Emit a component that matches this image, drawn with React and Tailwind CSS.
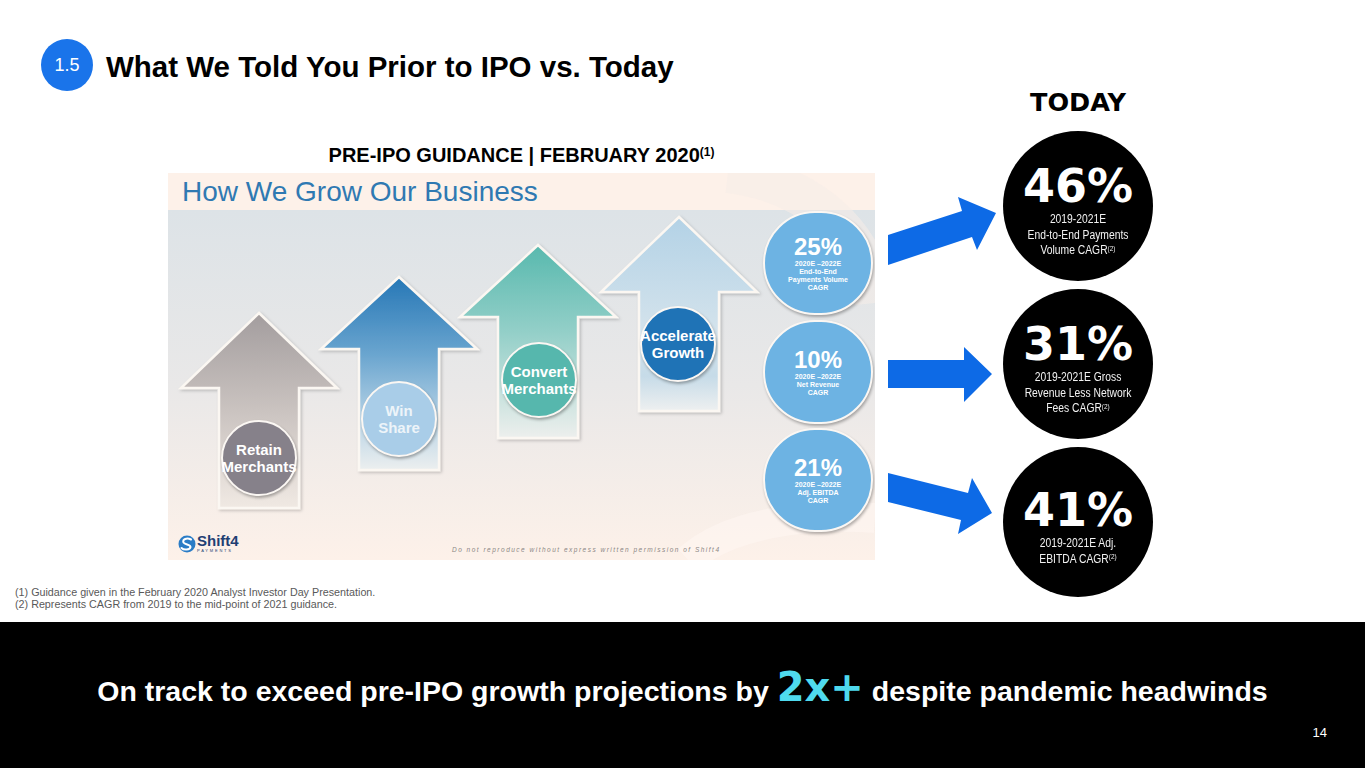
const arrows = [
  { cx: 91, ty: 140, by: 215, bb: 335, g: "g1" },
  { cx: 231, ty: 104, by: 176, bb: 297, g: "g2" },
  { cx: 370, ty: 72, by: 144, bb: 265, g: "g3" },
  { cx: 511, ty: 44, by: 119, bb: 238, g: "g4" },
];

function pts({ cx, ty, by, bb }) {
  const hw = 78;
  const sw = 40;
  return `${cx},${ty} ${cx + hw},${by} ${cx + sw},${by} ${cx + sw},${bb} ${cx - sw},${bb} ${cx - sw},${by} ${cx - hw},${by}`;
}

function GrowImage() {
  return (
    <div className="relative ml-[168px] mt-[8px] w-[707px] h-[387px] flex flex-col overflow-hidden">
      <div className="h-[37px] bg-[#fdf1e9] pl-[14px] pt-[5px] text-[28px] leading-none text-[#2f79b2] font-['Liberation_Sans',sans-serif]">
        How We Grow Our Business
      </div>
      <div className="flex-1 bg-linear-to-b from-[#dde3e7] via-[#e9e8e8] to-[#fdf1e9]"></div>

      <svg className="absolute left-0 top-0" width="707" height="387" viewBox="0 0 707 387">
        <defs>
          <linearGradient id="g1" x1="0" y1="0" x2="0" y2="1">
            <stop offset="0%" stopColor="#a39d9e" />
            <stop offset="50%" stopColor="#cac3c0" />
            <stop offset="100%" stopColor="#f0e9e3" />
          </linearGradient>
          <linearGradient id="g2" x1="0" y1="0" x2="0" y2="1">
            <stop offset="0%" stopColor="#2677b6" />
            <stop offset="40%" stopColor="#6aa5cf" />
            <stop offset="75%" stopColor="#b9d4e6" />
            <stop offset="100%" stopColor="#ecefef" />
          </linearGradient>
          <linearGradient id="g3" x1="0" y1="0" x2="0" y2="1">
            <stop offset="0%" stopColor="#58b9ae" />
            <stop offset="45%" stopColor="#93cfc8" />
            <stop offset="100%" stopColor="#edefed" />
          </linearGradient>
          <linearGradient id="g4" x1="0" y1="0" x2="0" y2="1">
            <stop offset="0%" stopColor="#b3d2e6" />
            <stop offset="60%" stopColor="#d4e3ec" />
            <stop offset="82%" stopColor="#c6dbe8" />
            <stop offset="100%" stopColor="#eef0f0" />
          </linearGradient>
          <filter id="sh" x="-20%" y="-20%" width="140%" height="140%">
            <feDropShadow dx="1.5" dy="1.5" stdDeviation="1.5" floodColor="#000" floodOpacity="0.22" />
          </filter>
        </defs>
        <path d="M560 0 C 640 10, 700 60, 707 130" fill="none" stroke="#f6ede8" strokeOpacity="0.55" strokeWidth="40" />
        <path d="M520 387 C 560 350, 640 340, 707 345" fill="none" stroke="#fff8f3" strokeOpacity="0.5" strokeWidth="30" />
        {arrows.map((a) => (
          <polygon
            key={a.g}
            points={pts(a)}
            fill={`url(#${a.g})`}
            stroke="#fbf7f2"
            strokeWidth="2.5"
            strokeLinejoin="miter"
            filter="url(#sh)"
          />
        ))}
      </svg>

      <div className="absolute left-[53px] top-[247px] w-[76px] h-[76px] rounded-full bg-[#86818a] border-2 border-[#fbf7f3] shadow-[1px_2px_3px_rgba(0,0,0,0.3)] flex flex-col items-center justify-center text-white text-[15px] font-bold leading-[17px] font-['Liberation_Sans',sans-serif] whitespace-nowrap">
        <span>Retain</span>
        <span>Merchants</span>
      </div>
      <div className="absolute left-[193px] top-[208px] w-[76px] h-[76px] rounded-full bg-[#a9cde8] border-2 border-[#fbf7f3] shadow-[1px_2px_3px_rgba(0,0,0,0.3)] flex flex-col items-center justify-center text-[#edf4f9] text-[15px] font-bold leading-[17px] font-['Liberation_Sans',sans-serif] whitespace-nowrap">
        <span>Win</span>
        <span>Share</span>
      </div>
      <div className="absolute left-[333px] top-[169px] w-[76px] h-[76px] rounded-full bg-[#56b7ad] border-2 border-[#fbf7f3] shadow-[1px_2px_3px_rgba(0,0,0,0.3)] flex flex-col items-center justify-center text-white text-[15px] font-bold leading-[17px] font-['Liberation_Sans',sans-serif] whitespace-nowrap">
        <span>Convert</span>
        <span>Merchants</span>
      </div>
      <div className="absolute left-[472px] top-[133px] w-[76px] h-[76px] rounded-full bg-[#1f73b6] border-2 border-[#fbf7f3] shadow-[1px_2px_3px_rgba(0,0,0,0.3)] flex flex-col items-center justify-center text-white text-[15px] font-bold leading-[17px] font-['Liberation_Sans',sans-serif] whitespace-nowrap">
        <span>Accelerate</span>
        <span>Growth</span>
      </div>

      <div className="absolute left-[595px] top-[38px] w-[110px] h-[104px] rounded-full bg-[#6db3e3] border-2 border-[#fbf7f3] shadow-[1px_2px_3px_rgba(0,0,0,0.3)] flex flex-col items-center justify-center text-white font-bold font-['Liberation_Sans',sans-serif] text-center">
        <span className="text-[24px] leading-none">25%</span>
        <span className="text-[7px] leading-[8px] mt-[1px]">2020E –2022E</span>
        <span className="text-[7px] leading-[8px]">End-to-End</span>
        <span className="text-[7px] leading-[8px]">Payments Volume</span>
        <span className="text-[7px] leading-[8px]">CAGR</span>
      </div>
      <div className="absolute left-[595px] top-[147px] w-[110px] h-[104px] rounded-full bg-[#6db3e3] border-2 border-[#fbf7f3] shadow-[1px_2px_3px_rgba(0,0,0,0.3)] flex flex-col items-center justify-center text-white font-bold font-['Liberation_Sans',sans-serif] text-center">
        <span className="text-[24px] leading-none">10%</span>
        <span className="text-[7px] leading-[8px] mt-[1px]">2020E –2022E</span>
        <span className="text-[7px] leading-[8px]">Net Revenue</span>
        <span className="text-[7px] leading-[8px]">CAGR</span>
      </div>
      <div className="absolute left-[595px] top-[255px] w-[110px] h-[104px] rounded-full bg-[#6db3e3] border-2 border-[#fbf7f3] shadow-[1px_2px_3px_rgba(0,0,0,0.3)] flex flex-col items-center justify-center text-white font-bold font-['Liberation_Sans',sans-serif] text-center">
        <span className="text-[24px] leading-none">21%</span>
        <span className="text-[7px] leading-[8px] mt-[1px]">2020E –2022E</span>
        <span className="text-[7px] leading-[8px]">Adj. EBITDA</span>
        <span className="text-[7px] leading-[8px]">CAGR</span>
      </div>

      <div className="absolute left-[10px] top-[361px] flex items-center gap-[1px]">
        <svg width="18" height="18" viewBox="0 0 18 18">
          <circle cx="9" cy="9" r="8.5" fill="#2a7cc6" />
          <path d="M13 4.5 C 9 2.5, 4 4, 5.5 7.5 C 7 10, 12.5 9, 12.5 12 C 12 15, 6 15.5, 3.5 13" fill="none" stroke="#ffffff" strokeWidth="2" strokeLinecap="round" />
        </svg>
        <div className="flex flex-col leading-none font-['Liberation_Sans',sans-serif] text-[#1f3f73]">
          <span className="text-[15px] font-bold leading-[14px]">Shift4</span>
          <span className="text-[4px] tracking-[1.8px] leading-[5px]">PAYMENTS</span>
        </div>
      </div>
      <div className="absolute left-[284px] top-[372px] text-[6.5px] italic tracking-[1.5px] text-[#8c8886] font-['Liberation_Sans',sans-serif] whitespace-nowrap">
        Do not reproduce without express written permission of Shift4
      </div>
    </div>
  );
}

function TodayCircle({ num, lines }) {
  return (
    <div className="w-[150px] h-[150px] rounded-full bg-black flex flex-col items-center justify-center pt-[10px] text-white text-center">
      <span className="font-['DejaVu_Sans',sans-serif] font-bold text-[46px] leading-none">{num}</span>
      <div className="mt-[3px] w-[150px] scale-x-[0.86] origin-center font-['Liberation_Sans',sans-serif] text-[12px] leading-[15.5px] text-[#f2f2f2] whitespace-nowrap">
        {lines.map((l, i) => (
          <div key={i}>{l}</div>
        ))}
      </div>
    </div>
  );
}

function Sup2() {
  return <sup className="text-[7.5px]">(2)</sup>;
}

export default function App() {
  return (
    <div className="w-[1365px] h-[768px] bg-white overflow-hidden flex flex-col font-['Liberation_Sans',Arial,sans-serif] text-black">
      <div className="h-[622px] flex">
        <div className="w-[875px] flex flex-col">
          <div className="flex items-center pl-[41px] pt-[39px] gap-[13px]">
            <div className="w-[52px] h-[52px] rounded-full bg-[#1a74ea] flex items-center justify-center text-white text-[18px] leading-none">
              1.5
            </div>
            <h1 className="text-[29.5px] font-bold leading-none pt-[3px]">What We Told You Prior to IPO vs. Today</h1>
          </div>
          <div className="ml-[168px] w-[707px] mt-[54px] h-[20px] text-center text-[20px] font-bold leading-none">
            PRE-IPO GUIDANCE | FEBRUARY 2020<sup className="text-[12px]">(1)</sup>
          </div>
          <GrowImage />
          <div className="pl-[15px] mt-[26px] text-[10.75px] leading-[12px] text-[#595959]">
            <div>(1) Guidance given in the February 2020 Analyst Investor Day Presentation.</div>
            <div>(2) Represents CAGR from 2019 to the mid-point of 2021 guidance.</div>
          </div>
        </div>

        <div className="w-[128px]">
          <svg width="128" height="622" viewBox="0 0 128 622" className="block">
            <polygon points="13,265 13,235 87,211 83,197 121,213 102,250 97,237" fill="#0d6ae6" />
            <polygon points="13,360 89,360 89,347 117,374 89,402 89,388 13,388" fill="#0d6ae6" />
            <polygon points="13,473 93,493 97,478 117,513 83,534 86,520 13,502" fill="#0d6ae6" />
          </svg>
        </div>

        <div className="w-[150px] flex flex-col items-center pt-[90px]">
          <div className="font-['DejaVu_Sans',sans-serif] font-bold text-[25.5px] leading-none h-[25px]">TODAY</div>
          <div className="mt-[16px] flex flex-col gap-[8px]">
            <TodayCircle
              num="46%"
              lines={["2019-2021E", "End-to-End Payments", <span key="a">Volume CAGR<Sup2 /></span>]}
            />
            <TodayCircle
              num="31%"
              lines={["2019-2021E Gross", "Revenue Less Network", <span key="b">Fees CAGR<Sup2 /></span>]}
            />
            <TodayCircle
              num="41%"
              lines={["2019-2021E Adj.", <span key="c">EBITDA CAGR<Sup2 /></span>]}
            />
          </div>
        </div>
      </div>

      <div className="flex-1 bg-black flex flex-col text-white">
        <div className="flex items-baseline justify-center pt-[45px] whitespace-pre">
          <span className="text-[28.5px] font-bold leading-none">On track to exceed pre-IPO growth projections by </span>
          <span className="font-['DejaVu_Sans',sans-serif] font-bold text-[40px] leading-none text-[#4fdaee]">2x+</span>
          <span className="text-[28.5px] font-bold leading-none"> despite pandemic headwinds</span>
        </div>
        <div className="flex justify-end pr-[38px] mt-[19px] text-[13px] leading-none">14</div>
      </div>
    </div>
  );
}
